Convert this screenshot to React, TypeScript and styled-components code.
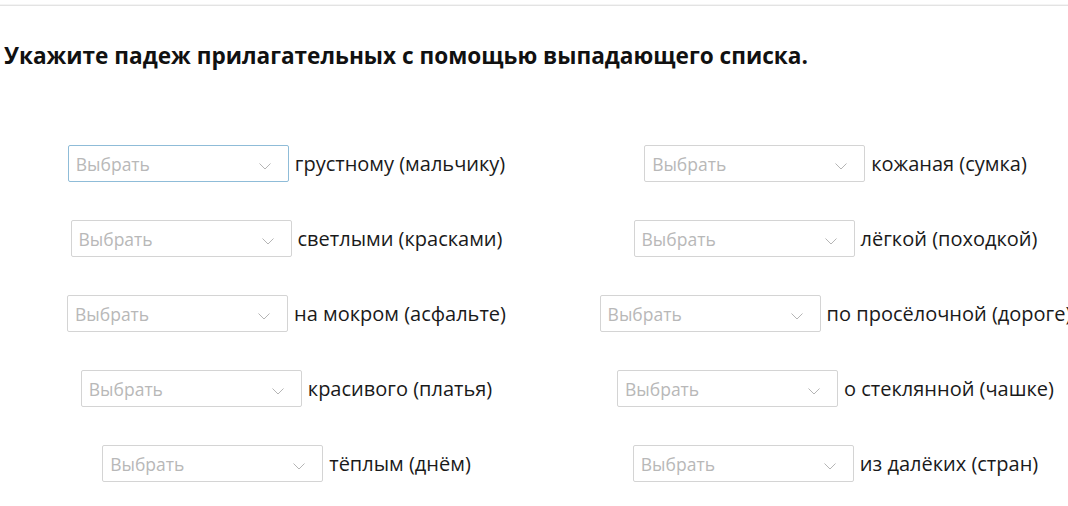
import styled, { createGlobalStyle } from "styled-components";

const rows: [string, string][] = [
  ["грустному (мальчику)", "кожаная (сумка)"],
  ["светлыми (красками)", "лёгкой (походкой)"],
  ["на мокром (асфальте)", "по просёлочной (дороге)"],
  ["красивого (платья)", "о стеклянной (чашке)"],
  ["тёплым (днём)", "из далёких (стран)"],
];

export default function App() {
  return (
    <>
      <GlobalStyle />
      <Page>
        <Divider />
        <Title>Укажите падеж прилагательных с помощью выпадающего списка.</Title>
        <Grid>
          {rows.map(([left, right], i) => (
            <Row key={i}>
              <Cell>
                <Pair label={left} focused={i === 0} />
              </Cell>
              <Cell>
                <Pair label={right} />
              </Cell>
            </Row>
          ))}
        </Grid>
      </Page>
    </>
  );
}

function Pair({ label, focused }: { label: string; focused?: boolean }) {
  return (
    <Group>
      <Select $focused={!!focused}>
        <Placeholder>Выбрать</Placeholder>
        <Chevron viewBox="0 0 12 7">
          <path d="M0.5 0.5 L6 6 L11.5 0.5" fill="none" stroke="#b5b5b5" strokeWidth="1" />
        </Chevron>
      </Select>
      <Label>{label}</Label>
    </Group>
  );
}

const GlobalStyle = createGlobalStyle`
  html, body {
    margin: 0;
    padding: 0;
    background: #fff;
    overflow: hidden;
    font-family: "Open Sans", "Noto Sans", sans-serif;
  }
`;

const Page = styled.div`
  width: 1068px;
  height: 506px;
  overflow: hidden;
  padding-top: 5px;
  box-sizing: border-box;
`;

const Divider = styled.div`
  height: 1px;
  background: #e3e3e3;
  box-shadow: 0 -1px 0 #f4f4f4;
`;

const Title = styled.h1`
  margin: 32px 0 0 4px;
  font-size: 22.6px;
  font-weight: 700;
  line-height: 36px;
  color: #111;
`;

const Grid = styled.div`
  margin: 71px 0 0 12px;
  width: 1098px;
  display: flex;
  flex-direction: column;
  gap: 38px;
`;

const Row = styled.div`
  display: grid;
  grid-template-columns: 549px 549px;
`;

const Cell = styled.div`
  display: flex;
  justify-content: center;
`;

const Group = styled.div`
  display: flex;
  align-items: center;
  gap: 6px;
  white-space: nowrap;
`;

const Select = styled.div<{ $focused: boolean }>`
  width: 221px;
  height: 37px;
  box-sizing: border-box;
  border: 1px solid ${(p) => (p.$focused ? "#8fbcd8" : "#d4d4d4")};
  border-radius: 2px;
  display: flex;
  align-items: center;
  justify-content: space-between;
  padding: 0 17px 0 7px;
  background: #fff;
`;

const Placeholder = styled.span`
  font-size: 17.5px;
  color: #b8b8b8;
`;

const Chevron = styled.svg`
  width: 12px;
  height: 7px;
  margin-top: 5px;
`;

const Label = styled.span`
  font-size: 20px;
  color: #1a1a1a;
`;
